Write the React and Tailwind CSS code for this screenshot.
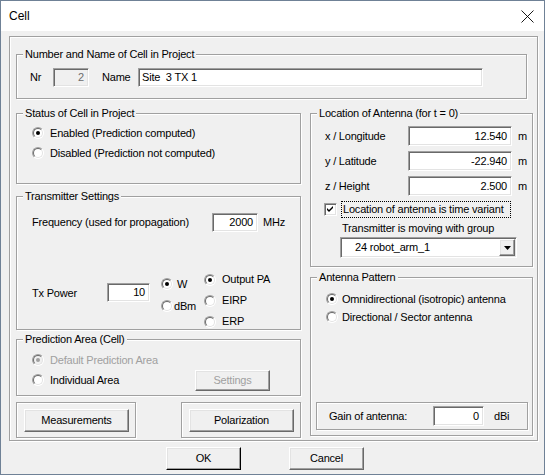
import React from "react";

const sunken =
  "border border-[#a0a0a0] border-b-white border-r-white shadow-[inset_1px_1px_0_#696969,inset_-1px_-1px_0_#e3e3e3]";
const raised =
  "border border-white border-b-[#696969] border-r-[#696969] shadow-[inset_-1px_-1px_0_#a0a0a0,inset_1px_1px_0_#e3e3e3]";
const etched = "border border-[#a0a0a0] shadow-[inset_1px_1px_0_#fff,1px_1px_0_#fff]";

function GroupBox({ label, className = "", children }) {
  return (
    <div className={`relative shrink-0 ${etched} ${className}`}>
      {label && (
        <span className="absolute -top-[7px] left-[6px] bg-[#f0f0f0] px-[2px] leading-[13px] whitespace-nowrap">
          {label}
        </span>
      )}
      {children}
    </div>
  );
}

function Field({ value, className = "", disabled }) {
  return (
    <div
      className={`flex shrink-0 items-center justify-end pr-[4px] ${sunken} ${
        disabled ? "bg-[#f0f0f0] text-[#6d6d6d]" : "bg-white"
      } ${className}`}
    >
      {value}
    </div>
  );
}

function Button({ children, className = "", disabled }) {
  return (
    <div
      className={`flex shrink-0 items-center justify-center bg-[#f0f0f0] ${raised} ${
        disabled ? "text-[#a0a0a0]" : ""
      } ${className}`}
    >
      {children}
    </div>
  );
}

function Radio({ checked, disabled }) {
  return (
    <span
      className={`relative flex h-[12px] w-[12px] shrink-0 items-center justify-center rounded-full border border-[#a0a0a0] border-b-white border-r-white ${
        disabled ? "bg-[#f0f0f0]" : "bg-white"
      }`}
    >
      <span className="absolute inset-0 rounded-full border border-[#696969] border-b-[#e3e3e3] border-r-[#e3e3e3]" />
      {checked && (
        <span className={`h-[4px] w-[4px] rounded-full ${disabled ? "bg-[#a0a0a0]" : "bg-black"}`} />
      )}
    </span>
  );
}

function RadioRow({ label, checked, disabled, className = "h-[20px]", gap = "ml-[6px]" }) {
  return (
    <div className={`flex items-center ${className}`}>
      <Radio checked={checked} disabled={disabled} />
      <span className={`${gap} whitespace-nowrap ${disabled ? "text-[#a0a0a0]" : ""}`}>{label}</span>
    </div>
  );
}

function Checkbox() {
  return (
    <span className={`flex h-[13px] w-[13px] shrink-0 items-center justify-center bg-white ${sunken}`}>
      <svg width="7" height="7" viewBox="0 0 7 7">
        <path d="M0 2 L2 4 L6 0 L6 2 L2 6 L0 4 Z" fill="#000" />
      </svg>
    </span>
  );
}

export default function App() {
  return (
    <div className="h-[475px] w-[545px] overflow-hidden border border-[#6f8196] bg-[#f0f0f0] font-['Liberation_Sans',Arial,sans-serif] text-[11px] leading-[13px] tracking-[-0.2px] text-black">
      <div className="flex h-[30px] items-center justify-between bg-white pl-[8px] pr-[10px]">
        <span className="text-[12px] tracking-normal">Cell</span>
        <svg width="13" height="13" viewBox="0 0 13 13">
          <path d="M0.5 0.5 L12.5 12.5 M12.5 0.5 L0.5 12.5" stroke="#000" strokeWidth="0.9" />
        </svg>
      </div>

      <div className="pl-[8px] pt-[5px]">
        <div className={`h-[405px] w-[529px] pl-[6px] pt-[17px] ${etched}`}>
          <GroupBox label="Number and Name of Cell in Project" className="h-[45px] w-[511px] pl-[13px] pt-[13px]">
            <div className="flex h-[19px] items-center">
              <span className="w-[23px]">Nr</span>
              <Field value="2" disabled className="h-[19px] w-[36px]" />
              <span className="ml-[13px] w-[36px]">Name</span>
              <div className={`flex h-[19px] w-[345px] items-center bg-white pl-[3px] ${sunken}`}>Site&nbsp; 3 TX 1</div>
            </div>
          </GroupBox>

          <div className="mt-[14px] flex gap-[9px]">
            {/* left column */}
            <div className="flex w-[285px] flex-col">
              <GroupBox label="Status of Cell in Project" className="h-[71px] pl-[15px] pt-[9px]">
                <RadioRow label="Enabled (Prediction computed)" checked />
                <RadioRow label="Disabled (Prediction not computed)" />
              </GroupBox>

              <GroupBox label="Transmitter Settings" className="mt-[12px] h-[134px] pl-[15px] pt-[16px]">
                <div className="flex h-[19px] items-center">
                  <span className="w-[180px]">Frequency (used for propagation)</span>
                  <Field value="2000" className="h-[19px] w-[46px]" />
                  <span className="ml-[5px]">MHz</span>
                </div>
                <div className="mt-[37px] flex items-start">
                  <span className="mt-[14px] flex h-[20px] w-[75px] items-center">Tx Power</span>
                  <Field value="10" className="mt-[14px] h-[19px] w-[43px]" />
                  <div className="ml-[11px] mt-[4px] flex w-[43px] flex-col">
                    <RadioRow label="W" checked className="h-[22px]" gap="ml-[4px]" />
                    <RadioRow label="dBm" className="h-[22px]" gap="ml-[1px]" />
                  </div>
                  <div className="flex flex-col">
                    <RadioRow label="Output PA" checked className="h-[21px]" />
                    <RadioRow label="EIRP" className="h-[21px]" />
                    <RadioRow label="ERP" className="h-[21px]" />
                  </div>
                </div>
              </GroupBox>

              <GroupBox label="Prediction Area (Cell)" className="mt-[9px] h-[57px] pl-[15px] pt-[10px]">
                <RadioRow label="Default Prediction Area" checked disabled />
                <div className="flex h-[20px] items-center">
                  <div className="w-[163px]">
                    <RadioRow label="Individual Area" />
                  </div>
                  <Button disabled className="h-[21px] w-[75px]">Settings</Button>
                </div>
              </GroupBox>

              <div className="mt-[6px] flex gap-[45px]">
                <GroupBox className="h-[36px] w-[120px] pl-[7px] pt-[6px]">
                  <Button className="h-[23px] w-[105px]">Measurements</Button>
                </GroupBox>
                <GroupBox className="h-[36px] w-[120px] pl-[7px] pt-[6px]">
                  <Button className="h-[23px] w-[105px]">Polarization</Button>
                </GroupBox>
              </div>
            </div>

            {/* right column */}
            <div className="flex w-[223px] flex-col">
              <GroupBox label="Location of Antenna (for t = 0)" className="h-[154px] pl-[14px] pt-[12px]">
                {[
                  ["x / Longitude", "12.540"],
                  ["y / Latitude", "-22.940"],
                  ["z / Height", "2.500"],
                ].map(([label, value]) => (
                  <div key={label} className="mb-[5px] flex h-[20px] items-center">
                    <span className="w-[83px]">{label}</span>
                    <Field value={value} className="h-[20px] w-[104px]" />
                    <span className="ml-[6px]">m</span>
                  </div>
                ))}
                <div className="-ml-[1px] mt-[3px] flex h-[17px] items-center">
                  <Checkbox />
                  <span className="ml-[4px] flex h-[17px] w-[170px] items-center border border-dotted border-black pl-[1px]">
                    Location of antenna is time variant
                  </span>
                </div>
                <div className="mt-[3px] flex h-[14px] items-center pl-[17px]">Transmitter is moving with group</div>
                <div className={`ml-[15px] mt-[2px] flex h-[21px] w-[177px] items-center bg-white ${sunken}`}>
                  <span className="flex-1 pl-[14px]">24 robot_arm_1</span>
                  <span className={`mr-[1px] flex h-[17px] w-[16px] items-center justify-center bg-[#f0f0f0] ${raised}`}>
                    <svg width="7" height="4" viewBox="0 0 7 4">
                      <path d="M0 0 H7 L3.5 4 Z" fill="#000" />
                    </svg>
                  </span>
                </div>
              </GroupBox>

              <GroupBox label="Antenna Pattern" className="mt-[10px] flex h-[159px] flex-col pt-[12px]">
                <div className="pl-[15px]">
                  <RadioRow label="Omnidirectional (isotropic) antenna" checked className="h-[18px]" gap="ml-[4px]" />
                  <RadioRow label="Directional / Sector antenna" className="h-[18px]" gap="ml-[4px]" />
                </div>
                <GroupBox className="mb-[5px] ml-[5px] mt-auto flex h-[28px] w-[212px] items-center pl-[12px]">
                  <span className="w-[104px]">Gain of antenna:</span>
                  <Field value="0" className="h-[20px] w-[51px]" />
                  <span className="ml-[10px]">dBi</span>
                </GroupBox>
              </GroupBox>
            </div>
          </div>
        </div>

        <div className="mt-[6px] flex">
          <Button className="ml-[157px] h-[23px] w-[75px] border-b-black border-r-black">OK</Button>
          <Button className="ml-[48px] h-[23px] w-[75px]">Cancel</Button>
        </div>
      </div>
    </div>
  );
}
